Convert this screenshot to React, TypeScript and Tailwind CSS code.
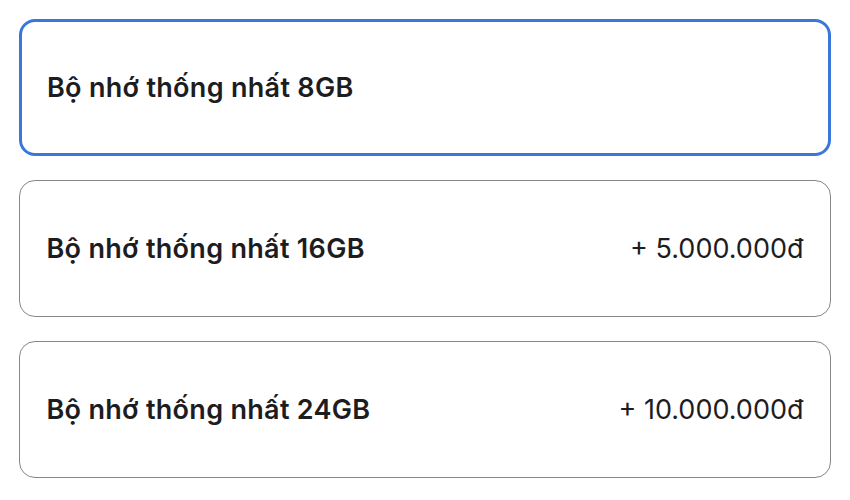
import React from "react";

const options = [
  { label: "Bộ nhớ thống nhất 8GB", price: "", selected: true },
  { label: "Bộ nhớ thống nhất 16GB", price: "+ 5.000.000đ", selected: false },
  { label: "Bộ nhớ thống nhất 24GB", price: "+ 10.000.000đ", selected: false },
];

export default function App() {
  return (
    <div
      className="w-[850px] h-[500px] bg-white px-[19px] pt-[19px] flex flex-col gap-[24px]"
      style={{ fontFamily: "Inter, 'Liberation Sans', sans-serif" }}
    >
      {options.map((o) =>
        o.selected ? (
          <div
            key={o.label}
            className="h-[137px] rounded-[16px] border-[3px] border-[#3a77d8] flex items-center justify-between px-[25px] pt-[2px] text-[#1d1d1f]"
          >
            <span className="text-[27px] font-semibold tracking-[0.3px]">{o.label}</span>
            <span className="text-[27px]">{o.price}</span>
          </div>
        ) : (
          <div
            key={o.label}
            className="h-[137px] rounded-[16px] border-[1.5px] border-[#86868b] flex items-center justify-between px-[26.5px] pt-[2px] text-[#1d1d1f]"
          >
            <span className="text-[27px] font-semibold tracking-[0.3px]">{o.label}</span>
            <span className="text-[27px]">{o.price}</span>
          </div>
        )
      )}
    </div>
  );
}
